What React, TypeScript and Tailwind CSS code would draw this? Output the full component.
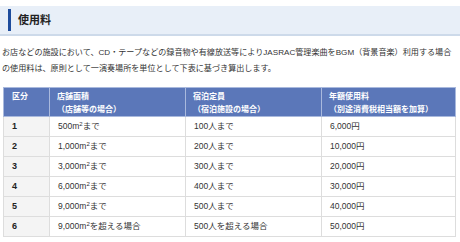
import React from "react";

const rows = [
  { n: "1", area: "500", areaSuffix: "まで", cap: "100人まで", fee: "6,000円" },
  { n: "2", area: "1,000", areaSuffix: "まで", cap: "200人まで", fee: "10,000円" },
  { n: "3", area: "3,000", areaSuffix: "まで", cap: "300人まで", fee: "20,000円" },
  { n: "4", area: "6,000", areaSuffix: "まで", cap: "400人まで", fee: "30,000円" },
  { n: "5", area: "9,000", areaSuffix: "まで", cap: "500人まで", fee: "40,000円" },
  { n: "6", area: "9,000", areaSuffix: "を超える場合", cap: "500人を超える場合", fee: "50,000円" },
];

export default function App() {
  return (
    <div
      className="w-[460px] h-[242px] bg-white overflow-hidden text-[#333]"
      style={{ fontFamily: '"Liberation Sans", "Noto Sans CJK JP", sans-serif' }}
    >
      <div className="mt-[6px] h-[30px] bg-[#e8eff8] border-b-2 border-[#cddaea] flex items-center pl-[8px]">
        <div className="w-[3px] h-[22px] bg-[#1d4c9c]" />
        <div className="ml-[7px] text-[11px] font-bold text-[#222] leading-none">使用料</div>
      </div>
      <p className="mt-[9px] px-[2px] text-[8.1px] leading-[16px] text-[#333]">
        お店などの施設において、CD・テープなどの録音物や有線放送等によりJASRAC管理楽曲をBGM（背景音楽）利用する場合の使用料は、原則として一演奏場所を単位として下表に基づき算出します。
      </p>
      <table className="mt-[10px] ml-[3px] w-[452px] border-collapse text-[8.5px] table-fixed">
        <colgroup>
          <col className="w-[46px]" />
          <col className="w-[136px]" />
          <col className="w-[136px]" />
          <col className="w-[134px]" />
        </colgroup>
        <thead>
          <tr className="bg-[#5b77b9] text-white font-bold text-[8px]">
            <th className="h-[27px] border border-[#a9b9dd] text-left align-top pt-[2px] pl-[8px] leading-[13px] font-bold">区分</th>
            <th className="border border-[#a9b9dd] text-left align-top pt-[2px] pl-[7px] leading-[13px] font-bold">
              店舗面積
              <br />
              （店舗等の場合）
            </th>
            <th className="border border-[#a9b9dd] text-left align-top pt-[2px] pl-[7px] leading-[13px] font-bold">
              宿泊定員
              <br />
              （宿泊施設の場合）
            </th>
            <th className="border border-[#a9b9dd] text-left align-top pt-[2px] pl-[7px] leading-[13px] font-bold">
              年額使用料
              <br />
              （別途消費税相当額を加算）
            </th>
          </tr>
        </thead>
        <tbody>
          {rows.map((r) => (
            <tr key={r.n} className="h-[20px]">
              <td className="border border-[#dddddd] bg-[#f4f4f4] pl-[8px] font-bold text-[#222] text-[9px]">{r.n}</td>
              <td className="border border-[#dddddd] pl-[8px]">
                {r.area}m<sup className="text-[6px] top-[-3px]">2</sup>
                {r.areaSuffix}
              </td>
              <td className="border border-[#dddddd] pl-[8px]">{r.cap}</td>
              <td className="border border-[#dddddd] pl-[8px]">{r.fee}</td>
            </tr>
          ))}
        </tbody>
      </table>
    </div>
  );
}
